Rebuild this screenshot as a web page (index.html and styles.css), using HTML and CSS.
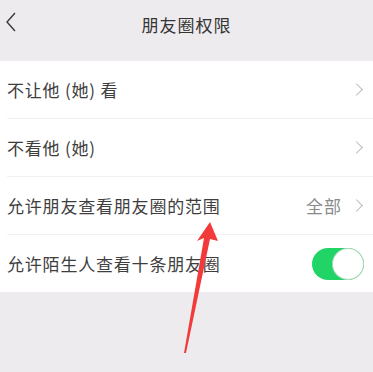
FILE: index.html
```html
<!DOCTYPE html>
<html lang="zh-CN">
<head>
    <meta charset="UTF-8">
    <meta name="viewport" content="width=device-width, initial-scale=1.0">
    <title>朋友圈权限</title>
    <link rel="stylesheet" href="styles.css">
</head>
<body>
    <div class="page">
        <div class="header">
            <svg class="back" width="12" height="22" viewBox="0 0 12 22">
                <path d="M10 2 L2 11 L10 20" fill="none" stroke="#3a3a3a" stroke-width="1.4"/>
            </svg>
            <h1>朋友圈权限</h1>
        </div>
        <div class="list">
            <div class="row">
                <span class="label">不让他 (她) 看</span>
                <span class="right"><span class="arrow"></span></span>
            </div>
            <div class="row">
                <span class="label">不看他 (她)</span>
                <span class="right"><span class="arrow"></span></span>
            </div>
            <div class="row">
                <span class="label">允许朋友查看朋友圈的范围</span>
                <span class="right"><span class="value">全部</span><span class="arrow"></span></span>
            </div>
            <div class="row">
                <span class="label">允许陌生人查看十条朋友圈</span>
                <span class="right"><span class="switch on"></span></span>
            </div>
        </div>
        <svg class="pointer" width="373" height="372" viewBox="0 0 373 372">
            <polygon points="210,222 218,241 210,239 186,353 184,353 204,238 197,241" fill="#f23a3a"/>
        </svg>
    </div>
</body>
</html>
```

FILE: styles.css
```css
body {
    margin: 0;
    background-color: #edebee;
    font-family: "Noto Sans CJK SC", "Noto Sans", sans-serif;
    color: #3e3e3e;
}

.page {
    position: relative;
    width: 373px;
    height: 372px;
    overflow: hidden;
}

.header {
    position: relative;
    height: 48px;
    display: flex;
    align-items: center;
    justify-content: center;
    margin-bottom: 13px;
}

.header h1 {
    margin: 0;
    font-size: 17px;
    font-weight: normal;
    letter-spacing: 1px;
    color: #353535;
}

.back {
    position: absolute;
    left: 5px;
    top: 11px;
}

.list {
    background-color: #fff;
}

.row {
    height: 58px;
    margin-left: 7px;
    padding-right: 9px;
    display: flex;
    align-items: center;
    justify-content: space-between;
    border-bottom: 1px solid #f1f0f2;
    box-sizing: border-box;
}

.row:last-child {
    border-bottom: none;
    height: 57px;
}

.label {
    font-size: 17px;
    letter-spacing: 0.8px;
}

.right {
    display: flex;
    align-items: center;
}

.value {
    font-size: 17px;
    color: #8a8a8a;
    margin-right: 10px;
    letter-spacing: 1px;
}

.arrow {
    width: 8px;
    height: 8px;
    border-top: 1.5px solid #b8b8b8;
    border-right: 1.5px solid #b8b8b8;
    transform: rotate(45deg);
    margin-right: 3px;
}

.switch {
    position: relative;
    width: 52px;
    height: 32px;
    border-radius: 16px;
    background-color: #21d466;
    box-sizing: border-box;
}

.switch::after {
    content: "";
    position: absolute;
    right: 1px;
    top: 1px;
    width: 30px;
    height: 30px;
    border-radius: 50%;
    background-color: #fff;
    box-shadow: 0 0 0 1px #b7d9c0;
}

.pointer {
    position: absolute;
    left: 0;
    top: 0;
}
```
